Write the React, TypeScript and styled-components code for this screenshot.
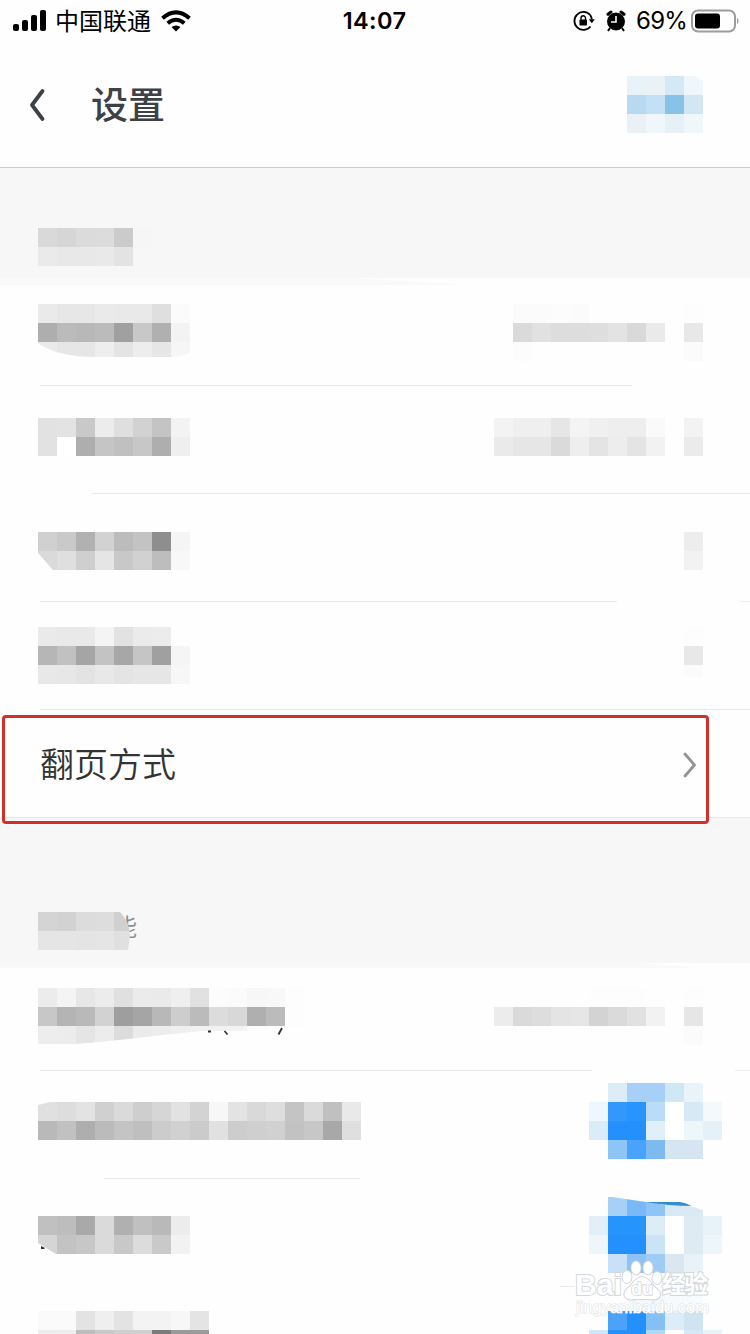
import React from "react";
import styled, { createGlobalStyle } from "styled-components";

const GlobalStyle = createGlobalStyle`
  body { margin: 0; background: #fefefe; overflow: hidden; }
  * { box-sizing: border-box; }
`;

const CELL = 19;

const Page = styled.main`
  position: relative;
  width: 750px;
  height: 1334px;
  overflow: hidden;
  background: #fefefe;
  color: #333;
  font-family: "Noto Sans CJK SC", sans-serif;
`;

const StatusBar = styled.header`
  display: grid;
  grid-template-columns: 1fr auto 1fr;
  align-items: center;
  height: 40px;
  padding: 0 11px 0 13px;
  color: #000;
`;

const StatusGroup = styled.div<{ $end?: boolean }>`
  display: flex;
  align-items: center;
  justify-content: ${(p) => (p.$end ? "flex-end" : "flex-start")};
  height: 40px;
  svg { display: block; flex: none; }
`;

const Carrier = styled.span`
  margin: 0 10px 0 9px;
  font-size: 24px;
  line-height: 38px;
  height: 40px;
`;

const Clock = styled.span`
  margin-right: 3px;
  font: 600 23.5px/41px Inter, sans-serif;
  letter-spacing: 0.4px;
`;

const Percent = styled.span`
  margin: 0 4px 0 10px;
  font: 400 24px/41px Inter, sans-serif;
  letter-spacing: -0.8px;
`;

const NavBar = styled.nav`
  display: flex;
  align-items: flex-start;
  height: 128px;
  padding: 0 47px 0 28px;
  border-bottom: 1px solid #cbcbcb;
`;

const BackIcon = styled.svg`
  display: block;
  margin-top: 47px;
`;

const Title = styled.h1`
  flex: 1;
  margin: 35px 0 0 44px;
  color: #3d4146;
  font-size: 37px;
  font-weight: 500;
  line-height: 56px;
`;

const SectionHeader = styled.div<{ $height: number; $top: number }>`
  position: relative;
  height: ${(p) => p.$height}px;
  padding: ${(p) => p.$top}px 0 0 38px;
  background: #f7f7f7;
`;

const SectionEdge = styled.svg`
  position: absolute;
  left: 0;
  top: 100%;
  display: block;
`;

const SectionText = styled.span`
  position: absolute;
  left: 113px;
  top: 88px;
  color: #8f8f8f;
  font-size: 24px;
  line-height: 40px;
  clip-path: inset(0 0 0 13px);
`;

const Row = styled.section`
  position: relative;
  display: flex;
  flex-direction: column;
  height: 108px;
`;

const RowBody = styled.div<{ $end: number }>`
  display: flex;
  flex: 1;
  min-height: 0;
  align-items: flex-start;
  justify-content: space-between;
  padding: 0 ${(p) => p.$end}px 0 38px;
`;

const Divider = styled.div<{ $start: number; $width: number }>`
  display: flex;
  justify-content: flex-end;
  height: 1px;
  flex: none;
  background: linear-gradient(#e9e9e9, #e9e9e9) ${(p) => p.$start}px 0 / ${(p) => p.$width}px 1px no-repeat;
`;

const DividerTail = styled.span<{ $width: number }>`
  width: ${(p) => p.$width}px;
  background: #eee;
`;

const Label = styled.span`
  margin: 26px 0 0 2px;
  color: #333;
  font-size: 34px;
  font-weight: 350;
  line-height: 54px;
`;

const Chevron = styled.svg`
  display: block;
  margin-top: 41px;
`;

const Highlight = styled.div`
  position: absolute;
  left: 2px;
  top: 5px;
  width: 707px;
  height: 109px;
  z-index: 1;
  border: 3px solid #d0312a;
  border-radius: 4px;
`;

const MosaicGrid = styled.div<{ $cols: number; $top: number; $clip?: string }>`
  position: relative;
  display: grid;
  flex: none;
  grid-template-columns: repeat(${(p) => p.$cols}, ${CELL}px);
  grid-auto-rows: ${CELL}px;
  width: ${(p) => p.$cols * CELL}px;
  margin-top: ${(p) => p.$top}px;
  clip-path: ${(p) => p.$clip ?? "none"};
`;

const Cell = styled.i<{ $tone: string }>`
  background: ${(p) => p.$tone};
`;

const Marks = styled.svg`
  position: absolute;
  left: 0;
  top: 0;
  display: block;
`;

const Watermark = styled.svg`
  position: absolute;
  left: 570px;
  top: 1248px;
  z-index: 2;
`;

// Two digits are a grey level, six are a colour, "-" is an empty cell.
const toTone = (t: string) =>
  t === "-" ? "transparent" : t.length === 2 ? `#${t}${t}${t}` : `#${t}`;

function Mosaic({ rows, top = 0, clip }: { rows: string[]; top?: number; clip?: string }) {
  const cells = rows.map((r) => r.split(" "));
  return (
    <MosaicGrid $cols={cells[0].length} $top={top} $clip={clip}>
      {cells.flatMap((row, y) => row.map((t, x) => <Cell key={`${y}-${x}`} $tone={toTone(t)} />))}
    </MosaicGrid>
  );
}

type Block = { rows: string[]; top: number; clip?: string };
type Item = {
  left: Block;
  right?: Block;
  end?: number;
  line: [number, number];
  tail?: number;
  marks?: React.ReactNode;
};

const accountItems: Item[] = [
  {
    left: {
      top: 26,
      rows: ["ea e7 e7 ea e9 e9 df fb", "ae bb b8 bb a0 c8 b0 f3", "ea e6 e6 ee e4 ed e6 f6"],
      clip: "path('M0 0H152V49Q143 53 130 53H60Q18 53 0 39Z')",
    },
    right: {
      top: 26,
      rows: ["- fb fb fc fb - - - - - fd", "- da e1 dd dd de e3 d9 ea - e8", "- fc - - - - - - - - fb"],
    },
    line: [40, 592],
  },
  {
    left: { top: 32, rows: ["e2 e3 c9 ec df d2 c4 f3", "e2 ff ae c5 c0 c7 ae ef"] },
    right: { top: 32, rows: ["f3 ef ef e6 f4 f0 ee ee fa - f3", "ea e6 e6 da ee e4 ed e4 f2 - eb"] },
    line: [92, 658],
  },
  {
    left: {
      top: 38,
      rows: ["d0 c9 b1 d2 bc c3 8e f5", "da df cf e5 c8 d1 bd f8"],
      clip: "polygon(0 0, 100% 0, 100% 100%, 15px 100%, 0 21px)",
    },
    right: { top: 38, rows: ["ed", "f2"] },
    line: [40, 577],
    tail: 10,
  },
  {
    left: { top: 25, rows: ["ea e9 e9 f4 e2 eb ec -", "b6 c1 a5 c3 a7 c5 a0 f5", "e8 e7 e3 e8 e4 e6 e6 f7"] },
    right: { top: 25, rows: ["fd", "e8", "fb"], clip: "inset(0 0 7px 0)" },
    line: [40, 710],
  },
];

const featureItems: Item[] = [
  {
    left: {
      top: 25,
      rows: [
        "ec f4 e7 ec e0 eb ea ef e1 fc fb f7 f8 fd",
        "c7 b4 b9 d2 9e a5 b8 cd bb dc d8 af bb fd",
        "ed ec e5 ec dc eb ed ef f1 f2 f3 fb fb -",
      ],
      clip: "path('M0 0H266V38L209 43H164L115 48Q85 52 38 56H0Z')",
    },
    right: {
      top: 25,
      rows: ["- - - - - fd fd fd - - fd", "ec da dd e4 e6 d3 da e1 f2 - e6", "- - - - - - - - - - fb"],
    },
    line: [40, 552],
    tail: 15,
    marks: (
      <Marks width="300" height="80" fill="none" stroke="#333" strokeWidth="1.8">
        <path d="M208 68.5h3M224.5 68l3 3.5M282 65l-3.5 6.5" />
      </Marks>
    ),
  },
  {
    left: {
      top: 31,
      rows: [
        "e0 dd e3 d0 da ce d6 e2 d3 f7 e3 d9 de c4 da c0 e9",
        "b9 c1 ae bb c4 bf cc d1 cb e1 cd cf d1 c2 c7 a8 df",
      ],
      clip: "polygon(12px 0, 100% 0, 100% 100%, 0 100%, 0 3px)",
    },
    right: {
      top: 12,
      rows: [
        "- dcedf8 a7d0f9 a7d0f9 d0e7f5 e8f3fa -",
        "eef6ff 3398fc 2895fd bbdcf6 ff d7e9f4 f4fafb",
        "daecf8 2490fc 2490fc e1f0f8 ff edf6fa e5f1f8",
        "- 8fc5f6 49a3fa 7dbaef d5e5f2 d5e6f2 -",
      ],
    },
    end: 28,
    line: [104, 256],
  },
  {
    left: {
      top: 37,
      rows: ["c0 bd a9 da b0 c0 b9 ec", "d5 c3 c7 da c8 dc c9 f2"],
      clip: "polygon(0 0, 100% 0, 100% 100%, 18px 100%, 0 27px)",
    },
    right: {
      top: 18,
      rows: [
        "- a6d0f7 7ab8f7 8fc4f8 d7eaf5 d9eaf5 -",
        "e2eef8 2594fb 2594fb dcedf8 ff deebf3 e7f2f9",
        "eef6fb 2490fc 2490fc cbe3f7 ff deebf3 edf6fb",
        "- c8e1f8 8fc2f6 a0cbf5 dbe7f0 e9f2f8 -",
      ],
      clip: "path('M0 0H23L57 5L76 8L101 9L114 13V19H133V76H0Z')",
    },
    end: 28,
    line: [560, 15],
    marks: (
      <Marks width="750" height="80">
        <path d="M41 67l4 2-1 1h-3z" fill="#333" />
        <path d="M645 23H680Q687 24 691 27Q668 27 645 23Z" fill="#338fd2" />
      </Marks>
    ),
  },
  {
    left: { top: 24, rows: ["fa fa e3 ef e3 f3 f3 f7 e4", "ec ee bd c9 cf d0 7b 9a 9c"] },
    right: {
      top: 5,
      rows: [
        "- - f2f8fc f2f8fc f7fafc f8fbfd -",
        "- 4ca2f8 2490fc 84bff5 dcecf8 cfe3f0 -",
        "d0e7fb 2490fc 2490fc b0d8f5 ff d5e8f5 e7f2f9",
      ],
    },
    end: 28,
    line: [40, 0],
  },
];

function SettingRow({ item }: { item: Item }) {
  return (
    <Row>
      <RowBody $end={item.end ?? 47}>
        <Mosaic {...item.left} />
        {item.right && <Mosaic {...item.right} />}
      </RowBody>
      {item.marks}
      <Divider $start={item.line[0]} $width={item.line[1]}>
        {item.tail && <DividerTail $width={item.tail} />}
      </Divider>
    </Row>
  );
}

export default function App() {
  return (
    <Page>
      <GlobalStyle />
      <StatusBar>
        <StatusGroup>
          <svg width="33" height="22" viewBox="0 0 33 22">
            <rect x="0" y="14" width="6" height="7" rx="2" />
            <rect x="9" y="10" width="6" height="11" rx="2" />
            <rect x="18" y="5" width="6" height="16" rx="2" />
            <rect x="27" y="0" width="6" height="21" rx="2" />
          </svg>
          <Carrier>中国联通</Carrier>
          <svg width="30" height="22" viewBox="0 0 30 22" fill="none" stroke="#000" strokeWidth="4">
            <path d="M1.5 8.2Q15-3.5 28.500 8.200" />
            <path d="M6.700 13.300Q15 6.300 23.300 13.300" />
            <path d="M15 21.500L10.500 17Q15 13.800 19.500 17Z" fill="#000" stroke="none" />
          </svg>
        </StatusGroup>
        <Clock>14:07</Clock>
        <StatusGroup $end>
          <svg width="22" height="22" viewBox="0 0 22 22" fill="none" stroke="#000" strokeWidth="1.800">
            <path d="M17.200 5A9 9 0 1 0 17.500 16.500" />
            <path d="M17.200 5Q18.600 7 18.800 9.500" />
            <path d="M15.800 9.200h6l-3 4z" fill="#000" stroke="none" />
            <rect x="6.500" y="9.500" width="7.500" height="6" rx="0.800" fill="#000" stroke="none" />
            <path d="M8 10V8a2.250 2.250 0 0 1 4.500 0v2" strokeWidth="1.400" />
          </svg>
          <svg width="31" height="22" viewBox="-11 0 31 22">
            <circle cx="10" cy="11.500" r="9" />
            <path d="M2 4.300L5 2M18 4.300L15 2" stroke="#000" strokeWidth="3" strokeLinecap="round" />
            <path d="M4 18L2 21M16 18L18 21" stroke="#000" strokeWidth="2" />
            <path d="M10 6V12H5" fill="none" stroke="#fff" strokeWidth="1.600" />
          </svg>
          <Percent>69%</Percent>
          <svg width="48" height="24" viewBox="0 0 48 24">
            <rect x="1" y="1.500" width="43" height="21" rx="6" fill="none" stroke="#9c9c9c" strokeWidth="2" />
            <rect x="4" y="4.500" width="25" height="15" rx="3" />
            <path d="M46 8.500Q49 12 46 15.500Z" fill="#999" />
          </svg>
        </StatusGroup>
      </StatusBar>

      <NavBar>
        <BackIcon width="19" height="36" viewBox="0 0 19 36">
          <path d="M14.500 4L4 18L14.500 32" fill="none" stroke="#3d4146" strokeWidth="3.800" strokeLinecap="round" strokeLinejoin="round" />
        </BackIcon>
        <Title>设置</Title>
        <Mosaic
          top={36}
          rows={["e8f2f9 eaf1f7 d5e8f5 f0f7fc", "b8daf1 c4e0f4 88c3e7 d3e7f3", "e9f1f7 f0f7fb e6f1f7 f0f7fb"]}
          clip="polygon(0 0, 68px 0, 76px 5px, 76px 57px, 0 57px)"
        />
      </NavBar>

      <SectionHeader $height={110} $top={60}>
        <Mosaic rows={["d9 d6 db dc cb f6", "ea e8 e8 e9 e3 f7"]} />
        <SectionEdge width="470" height="8">
          <path d="M0 0H350Q420 4 466 7H0Z" fill="#f9f9f9" />
        </SectionEdge>
      </SectionHeader>

      {accountItems.map((item, i) => (
        <SettingRow key={i} item={item} />
      ))}
      <Row>
        <RowBody $end={52}>
          <Label>翻页方式</Label>
          <Chevron width="16" height="28" viewBox="0 0 16 28">
            <path d="M3 3L12.500 14L3 25" fill="none" stroke="#939393" strokeWidth="2.800" strokeLinecap="round" strokeLinejoin="round" />
          </Chevron>
        </RowBody>
        <Divider $start={0} $width={750} />
        <Highlight />
      </Row>

      <SectionHeader $height={145} $top={94}>
        <SectionText>能</SectionText>
        <Mosaic
          rows={["d4 d2 dc dd d0", "e5 e5 e4 e5 e0"]}
          clip="path('M0 0H82Q92 10 92 24L90 38H0Z')"
        />
        <SectionEdge width="700" height="6">
          <path d="M0 0H640L695 5H0Z" fill="#f9f9f9" />
        </SectionEdge>
      </SectionHeader>

      {featureItems.map((item, i) => (
        <SettingRow key={i} item={item} />
      ))}

      <Watermark width="145" height="72" viewBox="0 0 145 72" fill="#fff" stroke="#d3d8dc" strokeWidth="2" paintOrder="stroke">
        <g fontFamily="Liberation Sans, sans-serif" fontWeight="700">
          <text x="5" y="47" fontSize="30" textLength="47" lengthAdjust="spacingAndGlyphs">Bai</text>
          <ellipse cx="57" cy="29" rx="4.500" ry="6" />
          <ellipse cx="66" cy="20" rx="4.500" ry="6.500" />
          <ellipse cx="78" cy="20" rx="4.500" ry="6.500" />
          <ellipse cx="87" cy="30" rx="4.500" ry="6" />
          <path d="M72 29C63 31 63 37 57 41C51 48 57 53 64 51H80C90 53 93 46 87 41C81 37 80 30 72 29Z" />
          <text x="61" y="47" fontSize="18" strokeWidth="1.500" textLength="22">du</text>
        </g>
        <text x="92" y="45" fontSize="24" fontWeight="700" fontFamily="Noto Sans CJK SC, sans-serif" textLength="46">经验</text>
        <text x="6" y="65" fontSize="16" strokeWidth="1" stroke="#dde1e4" fontFamily="Liberation Sans, sans-serif" textLength="133" lengthAdjust="spacingAndGlyphs">jingyan.baidu.com</text>
      </Watermark>
    </Page>
  );
}
